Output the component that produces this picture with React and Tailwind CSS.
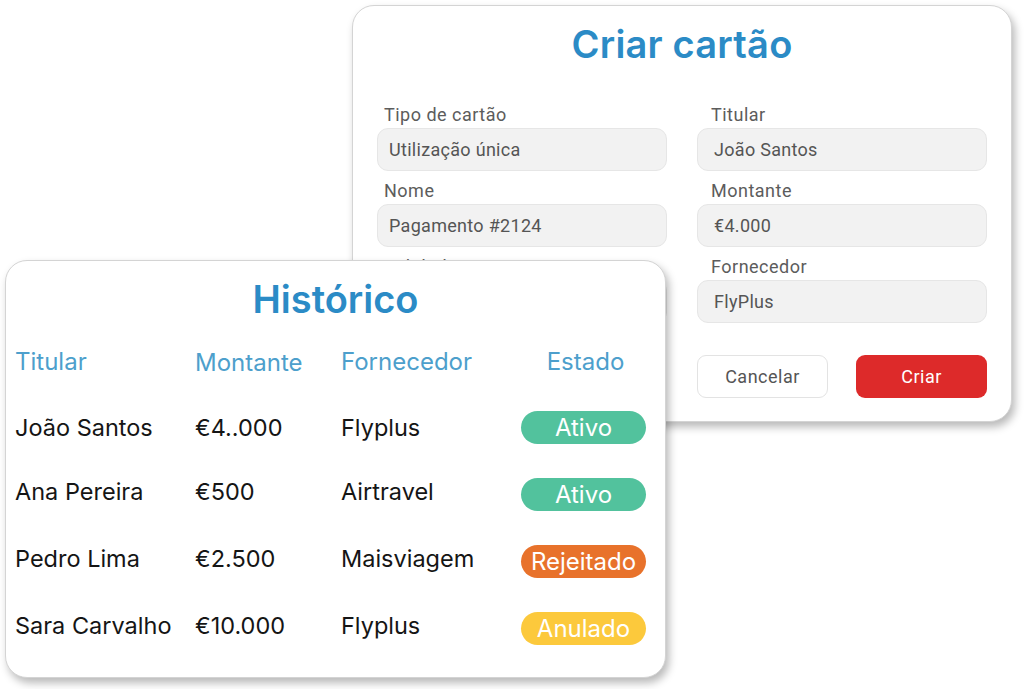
import React from 'react';

const fields = [
  { label: 'Tipo de cartão', value: 'Utilização única', side: 'left' },
  { label: 'Titular', value: 'João Santos', side: 'right' },
  { label: 'Nome', value: 'Pagamento #2124', side: 'left' },
  { label: 'Montante', value: '€4.000', side: 'right' },
  { label: 'Validade', value: '31/12/2024', side: 'left' },
  { label: 'Fornecedor', value: 'FlyPlus', side: 'right' },
];

const rows = [
  { titular: 'João Santos', montante: '€4..000', fornecedor: 'Flyplus', estado: 'Ativo', color: 'bg-[#52c29d]', lift: 'mb-0' },
  { titular: 'Ana Pereira', montante: '€500', fornecedor: 'Airtravel', estado: 'Ativo', color: 'bg-[#52c29d]', lift: 'mb-[6px]' },
  { titular: 'Pedro Lima', montante: '€2.500', fornecedor: 'Maisviagem', estado: 'Rejeitado', color: 'bg-[#e8722b]', lift: 'mb-[6px]' },
  { titular: 'Sara Carvalho', montante: '€10.000', fornecedor: 'Flyplus', estado: 'Anulado', color: 'bg-[#fcc93c]', lift: 'mb-[6px]' },
];

function CreateCard() {
  return (
    <div className="absolute left-[352px] top-[5px] w-[660px] h-[417px] bg-white rounded-[22px] border border-[#d4d4d4] shadow-[3px_5px_8px_rgba(0,0,0,0.28)] px-[24px] pt-[15px] font-['Roboto',sans-serif]">
      <h1 className="text-center text-[38px] leading-[46px] font-semibold text-[#2b8bc6] tracking-[0.2px] font-['Inter',sans-serif]">
        Criar cartão
      </h1>
      <div className="mt-[38px] grid grid-cols-2 gap-x-[30px] gap-y-[10px]">
        {fields.map((f) => (
          <div key={f.label} className="flex flex-col">
            <span className={`${f.side === 'left' ? 'pl-[7px]' : 'pl-[14px]'} text-[18px] leading-[20px] tracking-[0.5px] text-[#5c5c5c]`}>
              {f.label}
            </span>
            <div className={`${f.side === 'left' ? 'px-[11px]' : 'px-[16px]'} mt-[3px] h-[43px] rounded-[11px] bg-[#f2f2f2] border border-[#e6e6e6] flex items-center text-[18px] tracking-[0.3px] text-[#555]`}>
              {f.value}
            </div>
          </div>
        ))}
      </div>
      <div className="mt-[32px] grid grid-cols-2 gap-x-[30px]">
        <div />
        <div className="flex justify-between">
          <button className="w-[131px] h-[43px] rounded-[9px] border border-[#e3e3e3] bg-white text-[18px] tracking-[0.5px] text-[#555]">
            Cancelar
          </button>
          <button className="w-[131px] h-[43px] rounded-[9px] bg-[#dd2a2a] text-[18px] tracking-[0.5px] text-white">
            Criar
          </button>
        </div>
      </div>
    </div>
  );
}

function HistoryCard() {
  return (
    <div className="absolute left-[5px] top-[260px] w-[661px] h-[418px] bg-white rounded-[22px] border border-[#d4d4d4] shadow-[3px_5px_8px_rgba(0,0,0,0.28)] pl-[9px] pt-[15px] font-['Inter',sans-serif]">
      <h2 className="text-center pr-[9px] text-[38px] leading-[46px] font-semibold text-[#2b8bc6]">Histórico</h2>
      <div className="mt-[23px] grid grid-cols-[180px_146px_180px_125px] items-center text-[24px] leading-[30px] text-[#4d9fcc]">
        <span>Titular</span>
        <span className="mt-[3px]">Montante</span>
        <span>Fornecedor</span>
        <span className="text-center pl-[4px]">Estado</span>
      </div>
      <div className="mt-[31px] flex flex-col gap-[30px]">
        {rows.map((r) => (
          <div key={r.titular} className="h-[37px] grid grid-cols-[180px_146px_180px_125px] items-center text-[23.5px] leading-[30px] text-[#151515]">
            <span className={r.lift}>{r.titular}</span>
            <span className={r.lift}>{r.montante}</span>
            <span className={r.lift}>{r.fornecedor}</span>
            <span className={`${r.color} h-[33px] rounded-full text-white text-center text-[24px] leading-[33px]`}>
              {r.estado}
            </span>
          </div>
        ))}
      </div>
    </div>
  );
}

export default function App() {
  return (
    <div className="relative w-[1024px] h-[689px] bg-white overflow-hidden">
      <CreateCard />
      <HistoryCard />
    </div>
  );
}
